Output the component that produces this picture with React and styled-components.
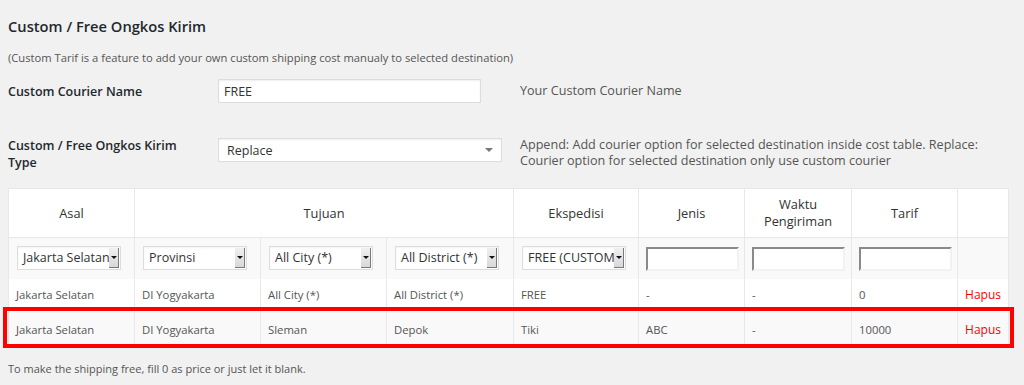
import React from 'react';
import styled, { createGlobalStyle } from 'styled-components';

const GlobalStyle = createGlobalStyle`
  body {
    margin: 0;
    background: #f1f1f1;
    font-family: "Open Sans", "Liberation Sans", sans-serif;
    color: #444;
  }
`;

const Page = styled.div`
  padding: 0 8px;
`;

const Title = styled.h3`
  margin: 0;
  padding-top: 15px;
  font-size: 14.7px;
  font-weight: 600;
  line-height: 22px;
  color: #23282d;
`;

const Note = styled.p`
  margin: ${(p) => p.top}px 0 0;
  font-size: ${(p) => p.size || 11.2}px;
  line-height: 18px;
  color: #555;
`;

const FormRow = styled.div`
  display: grid;
  grid-template-columns: 192px 284px 1fr;
  column-gap: 18px;
  align-items: ${(p) => (p.top ? 'start' : 'center')};
  margin-top: ${(p) => p.gap}px;
`;

const Label = styled.label`
  font-size: 12.5px;
  font-weight: 600;
  line-height: 17px;
  color: #23282d;
`;

const Help = styled.div`
  font-size: 12.6px;
  line-height: 16px;
  color: #555;
`;

const TextField = styled.input`
  box-sizing: border-box;
  width: 263px;
  height: 24px;
  padding: 0 5px;
  border: 1px solid #ddd;
  box-shadow: inset 0 1px 2px rgba(0, 0, 0, 0.07);
  background: #fff;
  font: 12.5px "Open Sans", sans-serif;
  color: #333;
  outline: none;
`;

const WideSelect = styled.div`
  box-sizing: border-box;
  display: flex;
  align-items: center;
  justify-content: space-between;
  width: 284px;
  height: 24px;
  margin-top: 1px;
  padding: 0 8px;
  border: 1px solid #ddd;
  box-shadow: inset 0 1px 2px rgba(0, 0, 0, 0.07);
  background: #fff;
  font-size: 12.5px;
  color: #333;
`;

const Caret = styled.span`
  width: 0;
  height: 0;
  border-left: 4px solid transparent;
  border-right: 4px solid transparent;
  border-top: 4px solid #777;
`;

const TableWrap = styled.div`
  position: relative;
  width: fit-content;
  margin-top: 17px;
`;

const Table = styled.table`
  width: 1000px;
  border-collapse: collapse;
  table-layout: fixed;
  background: #fff;
  border: 1px solid #e1e1e1;
`;

const HeadCell = styled.th`
  height: 48px;
  padding: 0 6px;
  border: 1px solid #e8e8e8;
  font-size: 12.8px;
  font-weight: 400;
  line-height: 17px;
  color: #333;
  text-align: center;
  vertical-align: middle;
`;

const Row = styled.tr`
  background: ${(p) => (p.shade ? '#f9f9f9' : '#fff')};
  height: ${(p) => p.h}px;
`;

const Cell = styled.td`
  padding: ${(p) => p.pt || 0}px 7px 0;
  border-left: 1px solid #e8e8e8;
  border-right: 1px solid #e8e8e8;
  font-size: 11.3px;
  line-height: 16px;
  color: #555;
  vertical-align: middle;
  text-align: ${(p) => (p.center ? 'center' : 'left')};
  white-space: nowrap;
  overflow: hidden;
`;

const FilterCell = styled.td`
  padding: 0 0 0 ${(p) => p.pl || 7}px;
  border-left: 1px solid #e8e8e8;
  border-right: 1px solid #e8e8e8;
  vertical-align: middle;
`;

const MiniSelect = styled.div`
  position: relative;
  box-sizing: border-box;
  width: 104px;
  height: 24px;
  padding: 0 12px 0 5px;
  border: 1px solid #ddd;
  box-shadow: inset 0 1px 2px rgba(0, 0, 0, 0.05);
  background: #fff;
  font-size: 12.5px;
  line-height: 22px;
  color: #333;
  white-space: nowrap;
  overflow: hidden;
`;

const MiniArrow = styled.span`
  position: absolute;
  top: 1px;
  right: 1px;
  bottom: 1px;
  width: 9px;
  display: flex;
  align-items: center;
  justify-content: center;
  background: linear-gradient(#f0f0f0, #d8d8d8);
  border-right: 1px solid #7a7a7a;
  border-bottom: 1px solid #7a7a7a;

  &::after {
    content: '';
    border-left: 3px solid transparent;
    border-right: 3px solid transparent;
    border-top: 3px solid #111;
  }
`;

const InsetInput = styled.input`
  box-sizing: border-box;
  width: 93px;
  height: 24px;
  border-top: 2px solid #8a8a8a;
  border-left: 2px solid #8a8a8a;
  border-right: 2px solid #f2f2f2;
  border-bottom: 2px solid #f2f2f2;
  background: #fff;
  outline: none;
`;

const Remove = styled.span`
  font-size: 12px;
  color: #f00;
`;

const Highlight = styled.div`
  position: absolute;
  left: -5px;
  right: -5px;
  top: 119px;
  height: 33px;
  border: 4px solid #f00;
  pointer-events: none;
`;

const widths = [126, 126, 126, 127, 125, 106, 107, 106, 51];

const rows = [
  ['Jakarta Selatan', 'DI Yogyakarta', 'All City (*)', 'All District (*)', 'FREE', '-', '-', '0'],
  ['Jakarta Selatan', 'DI Yogyakarta', 'Sleman', 'Depok', 'Tiki', 'ABC', '-', '10000'],
];

const Mini = ({ children }) => (
  <MiniSelect>
    {children}
    <MiniArrow />
  </MiniSelect>
);

export default function App() {
  return (
    <Page>
      <GlobalStyle />
      <Title>Custom / Free Ongkos Kirim</Title>
      <Note top={12}>
        (Custom Tarif is a feature to add your own custom shipping cost manualy to selected destination)
      </Note>

      <FormRow gap={12}>
        <Label>Custom Courier Name</Label>
        <TextField defaultValue="FREE" />
        <Help>Your Custom Courier Name</Help>
      </FormRow>

      <FormRow gap={34} top>
        <Label>Custom / Free Ongkos Kirim Type</Label>
        <WideSelect>
          <span>Replace</span>
          <Caret />
        </WideSelect>
        <Help>
          Append: Add courier option for selected destination inside cost table. Replace:
          Courier option for selected destination only use custom courier
        </Help>
      </FormRow>

      <TableWrap>
        <Table>
          <colgroup>
            {widths.map((w, i) => (
              <col key={i} style={{ width: w }} />
            ))}
          </colgroup>
          <thead>
            <tr>
              <HeadCell>Asal</HeadCell>
              <HeadCell colSpan={3}>Tujuan</HeadCell>
              <HeadCell>Ekspedisi</HeadCell>
              <HeadCell>Jenis</HeadCell>
              <HeadCell>Waktu Pengiriman</HeadCell>
              <HeadCell>Tarif</HeadCell>
              <HeadCell />
            </tr>
          </thead>
          <tbody>
            <Row shade h={41}>
              <FilterCell pl={8}><Mini>Jakarta Selatan</Mini></FilterCell>
              <FilterCell pl={8}><Mini>Provinsi</Mini></FilterCell>
              <FilterCell pl={8}><Mini>All City (*)</Mini></FilterCell>
              <FilterCell pl={8}><Mini>All District (*)</Mini></FilterCell>
              <FilterCell pl={8}><Mini>FREE (CUSTOM)</Mini></FilterCell>
              <FilterCell><InsetInput /></FilterCell>
              <FilterCell><InsetInput /></FilterCell>
              <FilterCell><InsetInput /></FilterCell>
              <FilterCell />
            </Row>
            {rows.map((r, i) => (
              <Row key={i} shade={i === 1} h={i === 1 ? 38 : 29}>
                {r.map((v, j) => (
                  <Cell key={j} pt={i === 1 ? 7 : 4}>{v}</Cell>
                ))}
                <Cell center pt={i === 1 ? 7 : 4}>
                  <Remove>Hapus</Remove>
                </Cell>
              </Row>
            ))}
          </tbody>
        </Table>
        <Highlight />
      </TableWrap>

      <Note top={14} size={11}>To make the shipping free, fill 0 as price or just let it blank.</Note>
    </Page>
  );
}
